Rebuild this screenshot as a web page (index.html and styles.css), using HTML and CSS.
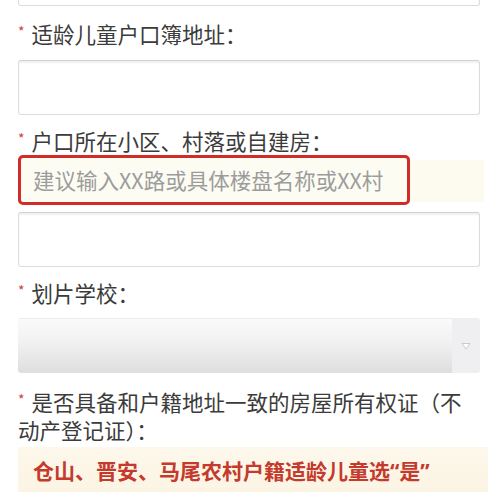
FILE: index.html
```html
<!DOCTYPE html>
<html lang="zh-CN">
<head>
<meta charset="utf-8">
<title>报名表单</title>
<link rel="stylesheet" href="styles.css">
</head>
<body>
<div class="form">
  <div class="input input-cut"></div>

  <div class="label l1"><span class="req">*</span>适龄儿童户口簿地址：</div>
  <div class="input"></div>

  <div class="label l2"><span class="req">*</span>户口所在小区、村落或自建房：</div>
  <div class="hint-band">
    <div class="hint-box">建议输入XX路或具体楼盘名称或XX村</div>
  </div>
  <div class="input i3"></div>

  <div class="label l3"><span class="req">*</span>划片学校：</div>
  <div class="select">
    <div class="select-body"></div>
    <div class="select-arrow">
      <svg width="10" height="8" viewBox="0 0 10 8"><path d="M1 1.5 L9 1.5 L5 7 Z" fill="#ffffff" stroke="#c9c9cf" stroke-width="1" stroke-linejoin="round"/></svg>
    </div>
  </div>

  <div class="label l4"><span class="req">*</span>是否具备和户籍地址一致的房屋所有权证（不动产登记证）：</div>
  <div class="notice">仓山、晋安、马尾农村户籍适龄儿童选<span class="q">“</span>是<span class="q">”</span></div>
</div>
</body>
</html>
```
FILE: styles.css
```css
html, body {
  margin: 0;
  padding: 0;
  background: #ffffff;
  overflow: hidden;
}
body {
  font-family: "Noto Sans CJK SC", "Noto Sans", sans-serif;
  color: #3b3b3b;
}
.form {
  padding: 0 20px 0 18px;
  display: flex;
  flex-direction: column;
}
.input {
  height: 55px;
  box-sizing: border-box;
  border: 1px solid #dcdcdc;
  border-top-color: #cfcfcf;
  border-radius: 3px;
  background: #ffffff;
  box-shadow: inset 0 2px 2px rgba(0, 0, 0, 0.06);
}
.input-cut {
  margin-top: -49px;
}
.label {
  font-size: 21.5px;
  line-height: 28px;
  height: 28px;
}
.req {
  color: #c9443a;
  font-size: 14px;
  line-height: 0;
  vertical-align: 6px;
  margin-right: 7px;
}
.l1 {
  padding-top: 14px;
  padding-bottom: 12px;
}
.l2 {
  padding-top: 12px;
}
.hint-band {
  margin: 5px -4px 3px 0;
  height: 42px;
  background: #fdfbf0;
  display: flex;
}
.hint-box {
  width: 392px;
  height: 50px;
  margin: -5px 0 -3px 0;
  box-sizing: border-box;
  border: 3px solid #d12c27;
  border-radius: 5px;
  background: #fdfcf3;
  color: #9c9c9c;
  font-size: 21.5px;
  line-height: 44px;
  padding-left: 12px;
  white-space: nowrap;
}
.i3 {
  margin-top: 7px;
}
.l3 {
  padding-top: 12px;
  padding-bottom: 11px;
}
.select {
  height: 55px;
  display: flex;
  border-radius: 3px;
  overflow: hidden;
}
.select-body {
  flex: 1;
  background: linear-gradient(#fafafa, #f2f2f2 40%, #dedede);
  border-top: 1px solid #ececec;
}
.select-arrow {
  width: 28px;
  background: #efeff2;
  display: flex;
  align-items: center;
  justify-content: center;
}
.l4 {
  padding-top: 15px;
  height: auto;
}
.notice {
  margin: 3px -8px 0 0;
  height: 46px;
  background: linear-gradient(#fdf8ec, #fcf4e3);
  color: #c43a2c;
  font-weight: bold;
  font-size: 21px;
  line-height: 28px;
  padding: 9px 0 0 15px;
  box-sizing: border-box;
  white-space: nowrap;
}
.q {
  font-family: "Noto Sans", sans-serif;
}
```
